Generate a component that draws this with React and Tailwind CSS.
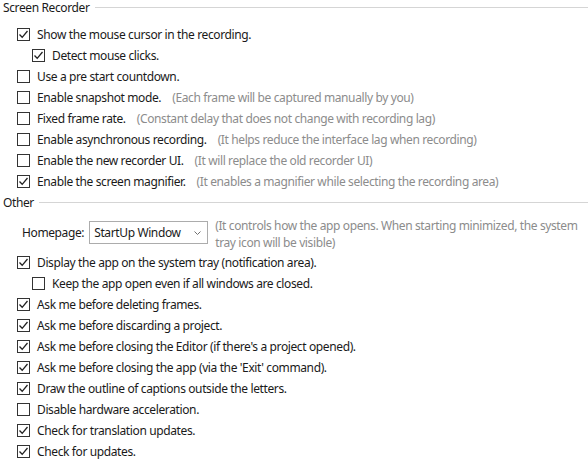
import React from "react";

function Check({ checked }) {
  return (
    <span className="w-[13px] h-[13px] border border-[#333333] bg-white flex items-center justify-center shrink-0">
      {checked && (
        <svg width="11" height="11" viewBox="0 0 11 11">
          <path d="M1.5 5.5 L4.2 8.3 L9.5 2" fill="none" stroke="#212121" strokeWidth="1.3" />
        </svg>
      )}
    </span>
  );
}

function Row({ checked, label, hint, indent }) {
  return (
    <div className={`h-[21px] flex items-center ${indent ? "pl-[32px]" : "pl-[17px]"}`}>
      <Check checked={checked} />
      <span className="ml-[7px] text-[#1a1a1a] whitespace-nowrap">{label}</span>
      {hint && <span className="ml-[11px] text-[#8c8c8c] whitespace-nowrap">{hint}</span>}
    </div>
  );
}

function Header({ title }) {
  return (
    <div className="h-[16px] flex items-center">
      <span className="text-[#1a1a1a] pl-[3px] whitespace-nowrap">{title}</span>
      <div className="flex-1 h-px bg-[#d5d5d5] ml-[5px] -mt-[1px]" />
    </div>
  );
}

export default function App() {
  return (
    <div
      className="w-[588px] h-[469px] bg-white overflow-hidden text-[12px] leading-[16px] tracking-[-0.38px]"
      style={{ fontFamily: '"Noto Sans", "Open Sans", sans-serif' }}
    >
      <Header title="Screen Recorder" />
      <div className="mt-[8px]">
        <Row checked label="Show the mouse cursor in the recording." />
        <Row checked indent label="Detect mouse clicks." />
        <Row label="Use a pre start countdown." />
        <Row label="Enable snapshot mode." hint="(Each frame will be captured manually by you)" />
        <Row label="Fixed frame rate." hint="(Constant delay that does not change with recording lag)" />
        <Row label="Enable asynchronous recording." hint="(It helps reduce the interface lag when recording)" />
        <Row label="Enable the new recorder UI." hint="(It will replace the old recorder UI)" />
        <Row checked label="Enable the screen magnifier." hint="(It enables a magnifier while selecting the recording area)" />
      </div>
      <div className="mt-[3px]">
        <Header title="Other" />
      </div>
      <div className="mt-[6px] pb-[1px] flex items-start pl-[22px]">
        <span className="mt-[4px] h-[23px] flex items-center text-[#1a1a1a]">Homepage:</span>
        <div className="mt-[4px] ml-[5px] w-[119px] h-[23px] border border-[#acacac] bg-white flex items-center justify-between pl-[4px] pr-[6px]">
          <span className="text-[#1a1a1a]">StartUp Window</span>
          <svg width="7" height="4" viewBox="0 0 7 4">
            <path d="M0.5 0.5 L3.5 3.5 L6.5 0.5" fill="none" stroke="#707070" strokeWidth="1" />
          </svg>
        </div>
        <span className="ml-[7px] text-[#8c8c8c] leading-[17px] w-[366px]">
          (It controls how the app opens. When starting minimized, the system tray icon will be visible)
        </span>
      </div>
      <div>
        <Row checked label="Display the app on the system tray (notification area)." />
        <Row indent label="Keep the app open even if all windows are closed." />
        <Row checked label="Ask me before deleting frames." />
        <Row checked label="Ask me before discarding a project." />
        <Row checked label="Ask me before closing the Editor (if there's a project opened)." />
        <Row checked label="Ask me before closing the app (via the 'Exit' command)." />
        <Row checked label="Draw the outline of captions outside the letters." />
        <Row label="Disable hardware acceleration." />
        <Row checked label="Check for translation updates." />
        <Row checked label="Check for updates." />
      </div>
    </div>
  );
}
